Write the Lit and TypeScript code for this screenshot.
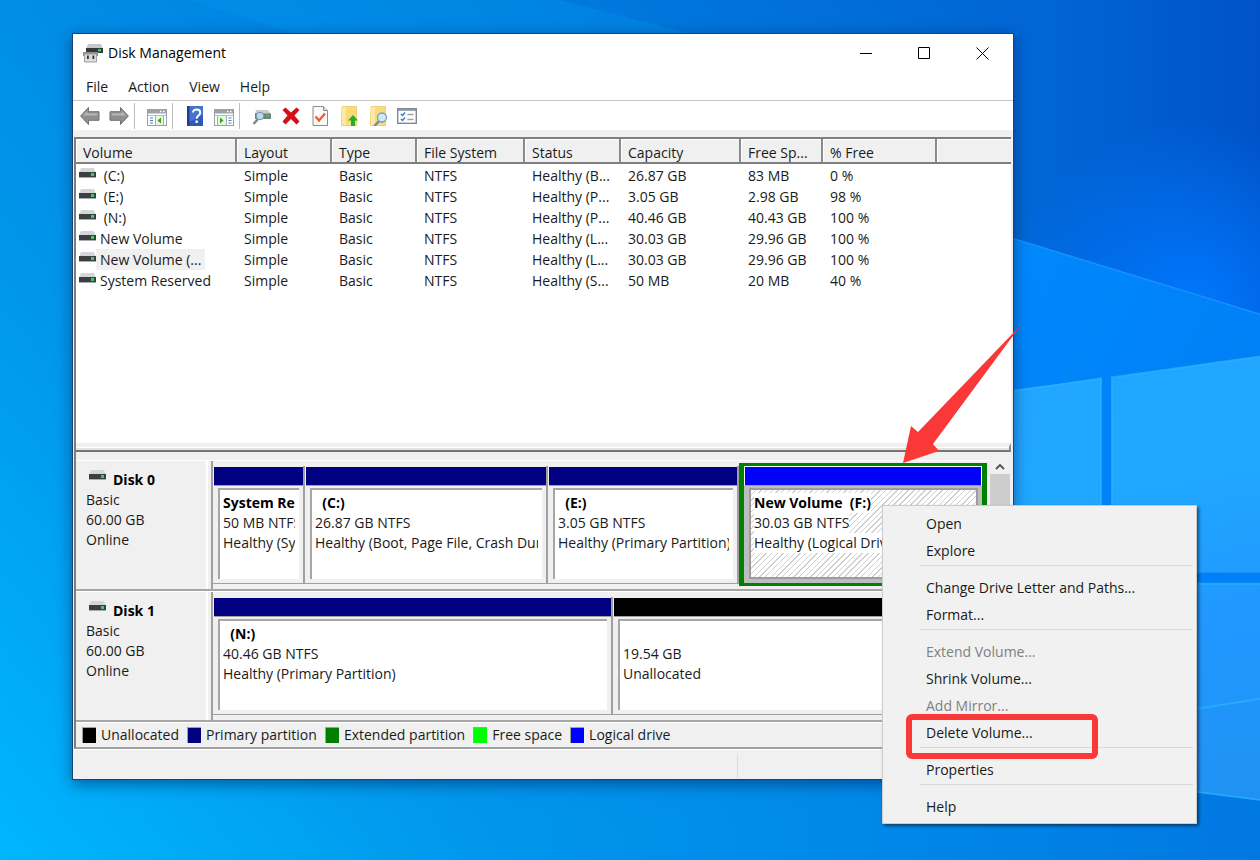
import { LitElement, html, css, svg } from "lit";
import { customElement } from "lit/decorators.js";

type Partition = {
  name: string;
  size: string;
  status: string;
  kind: "primary" | "logical" | "free";
  share: number;
};

type Disk = { name: string; partitions: Partition[] };

const columns = [
  { label: "Volume", width: 160 },
  { label: "Layout", width: 95 },
  { label: "Type", width: 85 },
  { label: "File System", width: 108 },
  { label: "Status", width: 96 },
  { label: "Capacity", width: 120 },
  { label: "Free Sp...", width: 82 },
  { label: "% Free", width: 114 },
];

const volumes = [
  [" (C:)", "Simple", "Basic", "NTFS", "Healthy (B...", "26.87 GB", "83 MB", "0 %"],
  [" (E:)", "Simple", "Basic", "NTFS", "Healthy (P...", "3.05 GB", "2.98 GB", "98 %"],
  [" (N:)", "Simple", "Basic", "NTFS", "Healthy (P...", "40.46 GB", "40.43 GB", "100 %"],
  ["New Volume", "Simple", "Basic", "NTFS", "Healthy (L...", "30.03 GB", "29.96 GB", "100 %"],
  ["New Volume (...", "Simple", "Basic", "NTFS", "Healthy (L...", "30.03 GB", "29.96 GB", "100 %"],
  ["System Reserved", "Simple", "Basic", "NTFS", "Healthy (S...", "50 MB", "20 MB", "40 %"],
];
const selectedVolume = 4;

const disks: Disk[] = [
  {
    name: "Disk 0",
    partitions: [
      { name: "System Reserved", size: "50 MB NTFS", status: "Healthy (System, Active)", kind: "primary", share: 92 },
      { name: "  (C:)", size: "26.87 GB NTFS", status: "Healthy (Boot, Page File, Crash Dump)", kind: "primary", share: 243 },
      { name: "  (E:)", size: "3.05 GB NTFS", status: "Healthy (Primary Partition)", kind: "primary", share: 191 },
      { name: "New Volume  (F:)", size: "30.03 GB NTFS", status: "Healthy (Logical Drive)", kind: "logical", share: 248 },
    ],
  },
  {
    name: "Disk 1",
    partitions: [
      { name: "  (N:)", size: "40.46 GB NTFS", status: "Healthy (Primary Partition)", kind: "primary", share: 400 },
      { name: " ", size: "19.54 GB", status: "Unallocated", kind: "free", share: 374 },
    ],
  },
];

const legend = [
  ["Unallocated", "black"],
  ["Primary partition", "navy"],
  ["Extended partition", "green"],
  ["Free space", "lime"],
  ["Logical drive", "blue"],
];

const menuItems: ({ label: string; disabled?: boolean } | null)[] = [
  { label: "Open" },
  { label: "Explore" },
  null,
  { label: "Change Drive Letter and Paths..." },
  { label: "Format..." },
  null,
  { label: "Extend Volume...", disabled: true },
  { label: "Shrink Volume..." },
  { label: "Add Mirror...", disabled: true },
  { label: "Delete Volume..." },
  null,
  { label: "Properties" },
  null,
  { label: "Help" },
];

const arrowShape = "M.6 10 8.500 1.500v4.200H19v8.600H8.500v4.200z";
const arrowShine = "M3 9.500 7.300 4.800v2.400H17.500v2.300z";

const toolIcons = {
  back: svg`<path d=${arrowShape} fill="#8f8f8f" stroke="#707070"/><path d=${arrowShine} fill="#b4b4b4"/>`,
  forward: svg`<g transform="matrix(-1 0 0 1 20 0)"><path d=${arrowShape} fill="#8f8f8f" stroke="#707070"/><path d=${arrowShine} fill="#b4b4b4"/></g>`,
  tree: svg`<rect x=".5" y="3.500" width="19" height="16" fill="#fff" stroke="#9aa1a8"/><rect x="1" y="4" width="18" height="3.500" fill="#98a3ac"/><path d="M13 5.500h1.500M16 5.500h1.500" stroke="#fff" stroke-width="1.500"/><path d="M1 9.500h18" stroke="#b5bcc2"/><path d="M3 12h3M3 14.500h3M3 17h3" stroke="#4a7fba"/><path d="M8.500 10v9M16.500 10v9" stroke="#a5acb2"/><rect x="9" y="10" width="7" height="9" fill="#e9f6e4"/><path d="M14 11.500v6l-3.500-3z" fill="#34a321"/>`,
  help: svg`<rect x="2" y="0" width="16" height="20" fill="#2f57bd"/><rect x="2" y="0" width="2.500" height="20" fill="#1d3e94"/><path d="M4.500 0H18v9L4.500 16z" fill="#5b82dc" opacity=".6"/><path d="M8 6.500c0-4 7.200-4 7.200.2 0 2.800-3.500 2.800-3.500 6" fill="none" stroke="#fff" stroke-width="2"/><rect x="10.500" y="14.500" width="2.400" height="2.400" fill="#fff"/>`,
  action: svg`<rect x=".5" y="3.500" width="19" height="16" fill="#fff" stroke="#9aa1a8"/><rect x="1" y="4" width="18" height="3.500" fill="#98a3ac"/><path d="M13 5.500h1.500M16 5.500h1.500" stroke="#fff" stroke-width="1.500"/><path d="M1 9.500h18" stroke="#b5bcc2"/><path d="M14.500 12h3M14.500 14.500h3M14.500 17h3" stroke="#4a7fba"/><path d="M3.500 10v9M12.500 10v9" stroke="#a5acb2"/><rect x="4" y="10" width="8" height="9" fill="#e9f6e4"/><path d="M6 11.500v6l3.500-3z" fill="#34a321"/>`,
  rescan: svg`<path d="M4 4h12l3 4H3z" fill="#c9cdd1"/><rect x="3" y="7.500" width="16" height="5.500" fill="#777c81"/><rect x="14" y="9" width="3" height="2.500" fill="#21d13c"/><path d="M6.500 12.500 1.500 18" stroke="#7c868e" stroke-width="2.400"/><circle cx="8" cy="10" r="3.700" fill="#b7dcf0" stroke="#7795aa"/>`,
  remove: svg`<path d="M1.500 4 4.500 1.500 10 6.500 15.500 1.500 18.500 4 13.500 9.500 18.500 15.500 15.500 18.500 10 13 4.500 18.500 1.500 15.500 6.500 9.500z" fill="#d40f16"/>`,
  properties: svg`<path d="M3 .5h10.500l4 4v15H3z" fill="#fafafa" stroke="#8b8b8b"/><path d="M13.500.500v4h4" fill="#ddd" stroke="#8b8b8b"/><path d="m5.500 10.500 3.500 4 6-7" fill="none" stroke="#f0592a" stroke-width="2.200"/>`,
  upload: svg`<path d="M3 .5h14.500v19H2.500z" fill="#fadb79" stroke="#efd07a"/><path d="M3 1h4v18H3z" fill="#fce9a5"/><path d="m14 9 5 5.500h-3V20h-4v-5.500H9z" fill="#27ae23"/>`,
  search: svg`<path d="M3 .5h14.500v19H2.500z" fill="#fadb79" stroke="#efd07a"/><path d="M3 1h4v18H3z" fill="#fce9a5"/><path d="M11.500 14.500 6.500 20" stroke="#7c868e" stroke-width="2.400"/><circle cx="14" cy="11.500" r="4.500" fill="#cfe8f7" stroke="#7e9db3" stroke-width="1.300"/>`,
  list: svg`<rect x=".7" y="2.700" width="18.600" height="14.600" fill="#fff" stroke="#7e8a94" stroke-width="1.400"/><path d="M1 4h18" stroke="#7e8a94" stroke-width="1.500"/><path d="m4 8 1.500 1.500L8 6.500M4 13l1.500 1.500L8 11.500" fill="none" stroke="#2d7fd6" stroke-width="1.500"/><path d="M10.500 8.500h6M10.500 13.500h6" stroke="#9aa2a9" stroke-width="1.300"/>`,
};

const tools: [keyof typeof toolIcons, string][][] = [
  [["back", "Back"], ["forward", "Forward"]],
  [["tree", "Show/Hide Console Tree"]],
  [["help", "Help"], ["action", "Show/Hide Action Pane"]],
  [
    ["rescan", "Rescan"],
    ["remove", "Delete"],
    ["properties", "Properties"],
    ["upload", "Open"],
    ["search", "Explore"],
    ["list", "Settings"],
  ],
];

const driveIcon = html`<svg class="drive" viewBox="0 0 17 12" aria-hidden="true">
  <path d="M2 0h13l2 5H0z" fill="#d3d6da"/>
  <rect y="4" width="17" height="6" fill="#3c3f42"/>
  <rect y="9" width="17" height="1" fill="#a8abae"/>
  <rect x="12" y="5" width="3" height="3" fill="#1fe04a"/>
</svg>`;

@customElement("app-root")
export class AppRoot extends LitElement {
  static styles = css`
    :host {
      display: block;
      position: relative;
      box-sizing: border-box;
      min-height: 100vh;
      padding: 33px 246px 81px 72px;
      overflow: hidden;
      background: #0084e8;
      font: 14px/20px "Open Sans", "Noto Sans", sans-serif;
      color: #1a1a1a;
    }
    * { box-sizing: border-box; }
    button {
      font: inherit;
      color: inherit;
      background: none;
      border: 0;
      padding: 0;
      margin: 0;
    }
    .wallpaper {
      position: absolute;
      inset: 0;
      width: 100%;
      height: 100%;
    }
    .window {
      position: relative;
      background: #f0f0f0;
      border: 1px solid #17456e;
      box-shadow: 0 4px 14px rgba(0, 20, 70, 0.5);
    }
    .titlebar {
      display: flex;
      align-items: center;
      height: 38px;
      padding: 0 2px 0 10px;
      background: #fff;
      color: #000;
    }
    .appicon { width: 20px; height: 20px; margin-right: 5px; }
    .title { flex: 1; margin: 0; font-size: 14px; font-weight: 400; }
    .winbtn {
      display: grid;
      place-items: center;
      width: 58px;
      height: 38px;
    }
    .winbtn svg { width: 13px; height: 13px; }
    .menubar {
      display: flex;
      gap: 20px;
      height: 29px;
      padding: 5px 13px 4px;
      background: #fff;
      border-bottom: 1px solid #c4c4c4;
    }
    .toolbar {
      display: flex;
      align-items: center;
      height: 29px;
      padding: 0 2px;
      background: #fff;
    }
    .tool { width: 29px; height: 24px; display: grid; place-items: center; }
    .tool svg { width: 20px; height: 20px; }
    .split { width: 1px; height: 26px; margin: 0 7px 0 1px; background: #bdbdbd; }
    .client {
      margin: 7px 2px 0 1px;
      border: 2px solid #7e7e7e;
      border-right: 0;
      border-bottom-color: #a0a0a0;
    }
    .list { height: 304px; background: #fff; }
    table { width: 100%; table-layout: fixed; border-collapse: collapse; }
    th {
      height: 24px;
      padding: 3px 0 0 7px;
      background: #f0f0f0;
      border-right: 2px solid #8b8b8b;
      border-bottom: 2px solid #7e7e7e;
      box-shadow: inset 1px 1px #fff;
      font-weight: 400;
      text-align: left;
      line-height: 19px;
      white-space: nowrap;
    }
    th:last-child { border-right: 0; }
    td { height: 21px; padding: 0 0 0 8px; line-height: 21px; white-space: nowrap; }
    tbody::before { content: ""; display: block; height: 1px; }
    .volume { display: flex; align-items: center; margin-left: -5px; white-space: pre; }
    .volume span { padding: 0 4px; }
    .volume .drive { margin-bottom: 3px; }
    .selected { background: #f0f0f0; }
    .drive { flex: none; width: 17px; height: 12px; }
    .splitter {
      height: 9px;
      border-top: 4px solid #f0f0f0;
      border-right: 2px solid #8b8b8b;
      border-bottom: 2px solid #747474;
      background: #e3e3e3;
      box-shadow: inset 0 1px #fff;
    }
    .graph { display: flex; padding-top: 8px; }
    .disks { flex: 1; min-width: 0; }
    .disk {
      display: flex;
      height: 131px;
      border-top: 1px solid #fff;
      border-bottom: 2px solid #a6a6a6;
    }
    .disklabel {
      width: 137px;
      padding: 9px 0 0 10px;
      border-right: 2px solid #a0a0a0;
      box-shadow: inset -3px 0 #f0f0f0, inset -5px 0 #fff;
    }
    .disklabel p, .box p { margin: 0; }
    .diskname { display: flex; font-weight: 700; color: #000; }
    .diskname .drive { margin: 0 7px 0 3px; }
    .partitions {
      display: grid;
      flex: 1;
      min-width: 0;
      align-items: start;
      padding: 2px 3px 0 0;
    }
    .part { min-width: 0; margin-top: 3px; border: 1px solid #a0a0a0; border-width: 0 2px 1px 0; }
    .part:last-child { border-right-width: 0; }
    .bar { height: 19px; border-bottom: 1px solid #a0a0a0; margin: 1px 0 0 1px; background: navy; }
    .free .bar { background: #000; }
    .box {
      height: 91px;
      margin: 2px 4px 4px 5px;
      padding: 3px 4px 0 3px;
      border: 2px solid #a6a6a6;
      border-width: 2px 0 0 2px;
      background: #fff;
    }
    .box p { overflow: hidden; white-space: pre; }
    .box .name { font-weight: 700; color: #000; }
    .logical,
    .logical:last-child { margin-top: 0; background: #bdbdbd; border: 3px solid #008000; border-width: 3px 5px; }
    .logical .bar { background: #0000ff; border: 1px solid #fff; height: 20px; border-bottom-color: #a0a0a0; margin: 0; }
    .logical .box {
      background: repeating-linear-gradient(135deg, #fff 0 3px, #cfcfcf 3px 4px);
      border: 2px solid #9c9c9c;
    }
    .logical .box p { width: fit-content; background: #fff; }
    .scroll { width: 20px; margin-right: 1px; background: #f0f0f0; }
    .up { display: grid; place-items: center; width: 20px; height: 14px; }
    .up svg { width: 10px; height: 7px; }
    .thumb { height: 150px; background: #cdcdcd; }
    .legend {
      display: flex;
      align-items: center;
      gap: 8px;
      height: 25px;
      margin: 0;
      padding: 0 6px;
      border-top: 1px solid #fff;
      list-style: none;
    }
    .legend li { display: flex; align-items: center; gap: 5px; }
    .swatch { width: 14px; height: 16px; border: 1px solid #a0a0a0; border-width: 1px 0 0 1px; }
    .black { background: #000; }
    .navy { background: navy; }
    .green { background: #008000; }
    .lime { background: #00ff00; }
    .blue { background: #0000ff; }
    .status { display: flex; justify-content: flex-end; height: 30px; padding: 5px 0 1px; border-top: 1px solid #fff; }
    .status span { width: 276px; border-left: 1px solid #d9d9d9; }
    .pointer { position: absolute; right: -8px; top: 290px; width: 118px; height: 140px; }
    .context {
      position: absolute;
      right: -184px;
      top: 471px;
      width: 315px;
      padding: 4px 3px 3px 2px;
      background: #f1f1f1;
      border: 1px solid #ccc;
      box-shadow: 2px 2px 3px rgba(0, 0, 0, 0.5);
    }
    .item { display: block; width: 100%; height: 27px; padding-left: 41px; text-align: left; line-height: 27px; }
    .item:disabled { color: #808080; }
    .context hr { height: 1px; margin: 1px 0 8px 35px; border: 0; background: #dadada; }
    .mark {
      position: absolute;
      left: 23px;
      top: 208px;
      width: 192px;
      height: 45px;
      border: 6px solid #fb3838;
      border-radius: 6px;
      pointer-events: none;
    }
  `;

  private renderWallpaper() {
    return html`<svg class="wallpaper" viewBox="0 0 1260 860" preserveAspectRatio="none" aria-hidden="true">
      <defs>
        <linearGradient id="base" x1="0" y1="860" x2="1000" y2="0" gradientUnits="userSpaceOnUse">
          <stop offset="0" stop-color="#00b6ff"/><stop offset=".3" stop-color="#0096ea"/>
          <stop offset=".62" stop-color="#0082e2"/><stop offset="1" stop-color="#0068d4"/>
        </linearGradient>
        <linearGradient id="night" x1="900" y1="0" x2="1260" y2="0" gradientUnits="userSpaceOnUse">
          <stop offset="0" stop-color="#0068d4" stop-opacity="0"/><stop offset=".4" stop-color="#0066d6"/><stop offset="1" stop-color="#0052c8"/>
        </linearGradient>
        <radialGradient id="glow" cx="1190" cy="310" r="190" gradientUnits="userSpaceOnUse">
          <stop offset="0" stop-color="#0078ff"/><stop offset="1" stop-color="#0078ff" stop-opacity="0"/>
        </radialGradient>
        <linearGradient id="beam" x1="1014" y1="260" x2="1260" y2="380" gradientUnits="userSpaceOnUse">
          <stop offset="0" stop-color="#0088fc"/><stop offset="1" stop-color="#0080f6"/>
        </linearGradient>
        <linearGradient id="pane" x1="1100" y1="370" x2="1180" y2="800" gradientUnits="userSpaceOnUse">
          <stop offset="0" stop-color="#22a6ff"/><stop offset=".25" stop-color="#20a8ff"/><stop offset=".6" stop-color="#2098ff"/><stop offset="1" stop-color="#2092f4"/>
        </linearGradient>
        <linearGradient id="floor" x1="300" y1="0" x2="1260" y2="0" gradientUnits="userSpaceOnUse">
          <stop offset="0" stop-color="#009cf4" stop-opacity="0"/><stop offset=".55" stop-color="#008ae8"/><stop offset="1" stop-color="#0078e2"/>
        </linearGradient>
      </defs>
      <rect width="1260" height="860" fill="url(#base)"/>
      <path d="M190 0 300 36H700L560 0z" fill="#009af0" opacity=".3"/>
      <path d="M900 0h360v860H900z" fill="url(#night)"/>
      <path d="M900 100h360v500H900z" fill="url(#glow)"/>
      <path d="M960 222 1260 314V860H960z" fill="url(#beam)"/>
      <path d="M960 222 1260 314" stroke="#1a90ff" stroke-width="1.500"/>
      <path d="M960 396 1101 378V572H960zM1112 377 1260 356V572H1112zM1112 583h148V799L1197 791 960 780V583z" fill="url(#pane)"/>
      <path d="M1112 572V377l148-21M1014 391l87-13V572M1197 583h63M1197 708l63-10M1197 791l63 8" fill="none" stroke="#2cb2ff" stroke-width="2" opacity=".7"/>
      <path d="M300 779H960L1197 792 1260 800V860H300z" fill="url(#floor)"/>
    </svg>`;
  }

  private renderPartition(part: Partition) {
    return html`<section class="part ${part.kind}">
      <div class="bar"></div>
      <div class="box">
        <p class="name">${part.name}</p>
        <p>${part.size}</p>
        <p>${part.status}</p>
      </div>
    </section>`;
  }

  private renderDisk(disk: Disk) {
    const tracks = disk.partitions.map((p) => `minmax(0, ${p.share}fr)`).join(" ");
    return html`<article class="disk">
      <div class="disklabel">
        <p class="diskname">${driveIcon}${disk.name}</p>
        <p>Basic</p>
        <p>60.00 GB</p>
        <p>Online</p>
      </div>
      <div class="partitions" style="grid-template-columns: ${tracks}">
        ${disk.partitions.map((p) => this.renderPartition(p))}
      </div>
    </article>`;
  }

  render() {
    return html`
      ${this.renderWallpaper()}
      <main class="window">
        <header class="titlebar">
          <svg class="appicon" viewBox="0 0 20 20" aria-hidden="true">
            <path d="M5 1h13l2 5H3z" fill="#c5c9cc"/><path d="M3 5h17v5H3z" fill="#35383a"/>
            <rect x="15" y="6" width="3" height="2.500" fill="#22d83f"/>
            <path d="M0 9h15v4H0z" fill="#8b8f92"/><path d="M1.500 11h12v8h-12z" fill="#dcdcdc" stroke="#9b9fa2"/>
            <path d="M4 12.500h1.800V16H4zM9.500 12.500h1.800V16H9.500z" fill="#333"/>
          </svg>
          <h1 class="title">Disk Management</h1>
          <button class="winbtn" aria-label="Minimize"><svg viewBox="0 0 13 13"><path d="M0 6.500h12" stroke="#000"/></svg></button>
          <button class="winbtn" aria-label="Maximize"><svg viewBox="0 0 13 13"><path d="M.5.5h11v11H.5z" fill="none" stroke="#000"/></svg></button>
          <button class="winbtn" aria-label="Close"><svg viewBox="0 0 13 13"><path d="m.5.5 12 12m0-12-12 12" stroke="#000"/></svg></button>
        </header>
        <nav class="menubar">
          ${["File", "Action", "View", "Help"].map((m) => html`<button>${m}</button>`)}
        </nav>
        <div class="toolbar">
          ${tools.map(
            (group, i) => html`${i ? html`<span class="split"></span>` : ""}${group.map(
              ([icon, label]) => html`<button class="tool" aria-label=${label}><svg viewBox="0 0 20 20">${toolIcons[icon]}</svg></button>`
            )}`
          )}
        </div>
        <div class="client">
          <div class="list">
            <table>
              <colgroup>
                ${columns.map((c) => html`<col style="width: ${c.width}px">`)}<col>
              </colgroup>
              <thead><tr>${columns.map((c) => html`<th scope="col">${c.label}</th>`)}<th></th></tr></thead>
              <tbody>
                ${volumes.map(
                  ([name, ...rest], row) => html`<tr>
                    <td><div class="volume">${driveIcon}<span class=${row === selectedVolume ? "selected" : ""}>${name}</span></div></td>
                    ${rest.map((v) => html`<td>${v}</td>`)}
                  </tr>`
                )}
              </tbody>
            </table>
          </div>
          <div class="splitter"></div>
          <div class="graph">
            <div class="disks">${disks.map((disk) => this.renderDisk(disk))}</div>
            <div class="scroll">
              <button class="up" aria-label="Scroll up"><svg viewBox="0 0 10 7"><path d="M1 5 5 1l4 4" fill="none" stroke="#505050" stroke-width="1.800"/></svg></button>
              <div class="thumb"></div>
            </div>
          </div>
          <ul class="legend">
            ${legend.map(([label, tone]) => html`<li><span class="swatch ${tone}"></span>${label}</li>`)}
          </ul>
        </div>
        <footer class="status"><span></span></footer>
        <svg class="pointer" viewBox="0 0 118 140" aria-hidden="true">
          <path d="M0 139 8 102l7 6L118 1 30 120l6 7z" fill="#fb3838"/>
        </svg>
        <div class="context" role="menu">
          ${menuItems.map((item) =>
            item
              ? html`<button class="item" role="menuitem" ?disabled=${item.disabled}>${item.label}</button>`
              : html`<hr>`
          )}
          <span class="mark"></span>
        </div>
      </main>
    `;
  }
}
